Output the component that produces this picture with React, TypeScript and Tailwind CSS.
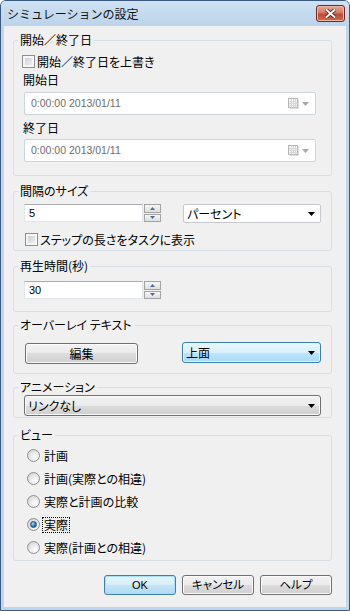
import React from 'react';

const num = "font-['Liberation_Sans',sans-serif]";

function Checkbox() {
  return (
    <div className="w-[13px] h-[13px] shrink-0 border border-[#8e8f8f] bg-[#f6f6f6] p-[2px]">
      <div className="w-full h-full bg-[linear-gradient(135deg,#cbcfd5,#eef0f2)]" />
    </div>
  );
}

function Radio({ checked }: { checked?: boolean }) {
  return (
    <div className="w-[13px] h-[13px] shrink-0 rounded-full border border-[#8e8f8f] bg-[radial-gradient(circle_at_65%_70%,#ffffff,#e4e5e7_55%,#c9cbce)] flex items-center justify-center">
      {checked && (
        <div className="w-[7px] h-[7px] rounded-full border border-[#1a4a72] bg-[radial-gradient(circle_at_35%_35%,#9fdcfa,#2a77b0_60%,#124a78)]" />
      )}
    </div>
  );
}

function DropArrow() {
  return (
    <svg width="7" height="4" viewBox="0 0 7 4">
      <path d="M0 0H7L3.5 4Z" fill="#000" />
    </svg>
  );
}

function SpinButtons() {
  return (
    <div className="w-[17px] h-[18px] flex flex-col gap-[1px] ml-[1px]">
      {[0, 1].map((i) => (
        <div
          key={i}
          className="flex-1 border border-[#a3a3a3] bg-[linear-gradient(#f7f7f7,#dedede)] flex items-center justify-center"
        >
          <svg width="5" height="3" viewBox="0 0 5 3">
            <path d={i === 0 ? 'M0 3H5L2.5 0Z' : 'M0 0H5L2.5 3Z'} fill="#4d6a9c" />
          </svg>
        </div>
      ))}
    </div>
  );
}

function SpinBox({ value }: { value: string }) {
  return (
    <div className="flex items-center">
      <div
        className={`w-[119px] h-[18px] bg-white border border-[#e2e6ea] border-t-[#abadb3] flex items-center pl-[4px] text-[11px] ${num}`}
      >
        {value}
      </div>
      <SpinButtons />
    </div>
  );
}

function DateField() {
  return (
    <div
      className={`ml-[10px] w-[292px] h-[23px] bg-white border border-[#cdd4dc] rounded-[2px] flex items-center pl-[6px] pr-[6px] text-[10.5px] text-[#6d6d6d] ${num}`}
    >
      <span className="flex-1">0:00:00 2013/01/11</span>
      <svg width="11" height="11" viewBox="0 0 11 11">
        <rect x="0.5" y="0.5" width="9" height="9" fill="#f4f4f4" stroke="#b8b8b8" />
        <path d="M1 3.5H9.5M1 5.5H9.5M1 7.5H9.5M3.5 1V9.5M5.5 1V9.5M7.5 1V9.5" stroke="#d8d8d8" />
        <path d="M10.5 1.5V10.5H1.5" stroke="#dcdcdc" fill="none" />
      </svg>
      <svg width="7" height="4" viewBox="0 0 7 4" className="ml-[3px]">
        <path d="M0 0H7L3.5 4Z" fill="#a8a8a8" />
      </svg>
    </div>
  );
}

function Group({
  title,
  className,
  children,
}: {
  title: string;
  className?: string;
  children: React.ReactNode;
}) {
  return (
    <fieldset className={`w-[319px] border border-[#d5dfe5] rounded-[3px] ${className ?? ''}`}>
      <legend className="ml-[4px] px-[2px] leading-[14px] text-[12px]">{title}</legend>
      {children}
    </fieldset>
  );
}

function Button({ label, primary, latin }: { label: string; primary?: boolean; latin?: boolean }) {
  return (
    <div
      className={`w-[72px] h-[20px] rounded-[3px] border flex items-center justify-center leading-none ${
        latin ? `text-[11px] ${num}` : 'text-[11.5px]'
      } ${
        primary
          ? 'border-[#3c7fb1] bg-[linear-gradient(#e6f5fc_0%,#d6eefa_50%,#c2e4f6_50%,#b0daf2_100%)] shadow-[inset_0_0_0_1px_#a9e0f7]'
          : 'border-[#707070] bg-[linear-gradient(#f2f2f2_0%,#ebebeb_50%,#dddddd_50%,#cfcfcf_100%)] shadow-[inset_0_0_0_1px_#fbfbfb]'
      }`}
    >
      {label}
    </div>
  );
}

const views = ['計画', '計画(実際との相違)', '実際と計画の比較', '実際', '実際(計画との相違)'];

export default function App() {
  return (
    <div className="w-[350px] h-[611px] flex flex-col border border-[#3a5a80] rounded-t-[6px] bg-[#c0d6ed] text-black font-['Noto_Sans_CJK_JP',sans-serif] [font-feature-settings:'palt']">
      <div className="h-[25px] shrink-0 flex items-start bg-[linear-gradient(#cfe1f3,#bcd3ea)] rounded-t-[5px]">
        <div className="flex-1 pl-[6px] pt-[5px] text-[12px] leading-[16px] [font-feature-settings:normal] text-[#111]">
          シミュレーションの設定
        </div>
        <div className="mt-[4px] mr-[4px] w-[29px] h-[17px] rounded-[3px] border border-[#6c2a22] bg-[linear-gradient(#e8a99c_0%,#d47763_45%,#c04a34_55%,#cf6a50_100%)] shadow-[inset_0_0_0_1px_#f0b8a8] flex items-center justify-center">
          <svg width="11" height="9" viewBox="0 0 11 9">
            <path d="M1.5 1L9.5 8M9.5 1L1.5 8" stroke="#4a1c16" strokeWidth="3.6" strokeLinecap="square" />
            <path d="M1.5 1L9.5 8M9.5 1L1.5 8" stroke="#ffffff" strokeWidth="2" strokeLinecap="square" />
          </svg>
        </div>
      </div>

      <div className="flex-1 mx-[3px] mb-[3px] bg-[#f0f0f0] flex flex-col pl-[9px]">
        <Group title="開始／終了日" className="mt-[7px] pb-[13px]">
          <div className="mt-[7px] h-[15px] flex items-center pl-[8px] text-[12px]">
            <Checkbox />
            <span className="ml-[2px] leading-[15px]">開始／終了日を上書き</span>
          </div>
          <div className="mt-[4px] h-[14px] leading-[14px] pl-[9px] text-[12px]">開始日</div>
          <div className="mt-[5px]">
            <DateField />
          </div>
          <div className="mt-[6px] h-[14px] leading-[14px] pl-[9px] text-[12px]">終了日</div>
          <div className="mt-[4px]">
            <DateField />
          </div>
        </Group>

        <Group title="間隔のサイズ" className="mt-[8px] pb-[3px]">
          <div className="mt-[6px] h-[19px] flex items-start pl-[10px]">
            <SpinBox value="5" />
            <div className="ml-[22px] w-[138px] h-[19px] bg-white border border-[#c6c9ce] rounded-[2px] flex items-center pl-[3px] pr-[5px] text-[12px] leading-none">
              <span className="flex-1">パーセント</span>
              <DropArrow />
            </div>
          </div>
          <div className="mt-[9px] h-[15px] flex items-center pl-[11px] text-[12px]">
            <Checkbox />
            <span className="ml-[2px] leading-[15px]">ステップの長さをタスクに表示</span>
          </div>
        </Group>

        <Group title="再生時間(秒)" className="mt-[8px] pb-[12px]">
          <div className="mt-[8px] pl-[10px]">
            <SpinBox value="30" />
          </div>
        </Group>

        <Group title="オーバーレイ テキスト" className="mt-[6px] pb-[9px]">
          <div className="mt-[10px] h-[22px] flex items-start pl-[11px]">
            <div className="mt-[1px] w-[113px] h-[21px] rounded-[3px] border border-[#707070] bg-[linear-gradient(#f2f2f2_0%,#ebebeb_50%,#dddddd_50%,#cfcfcf_100%)] shadow-[inset_0_0_0_1px_#fbfbfb] flex items-center justify-center text-[12px] leading-none">
              編集
            </div>
            <div className="ml-[44px] w-[139px] h-[21px] rounded-[3px] border border-[#3c7fb1] bg-[linear-gradient(#eaf6fd_0%,#d9f0fc_50%,#bee6fd_50%,#a7d9f5_100%)] shadow-[inset_0_0_0_1px_#e3f4fc] flex items-center pl-[3px] pr-[5px] text-[12px] leading-none">
              <span className="flex-1">上面</span>
              <DropArrow />
            </div>
          </div>
        </Group>

        <Group title="アニメーション" className="mt-[6px] pb-[1px]">
          <div className="mt-[1px] ml-[10px] w-[297px] h-[21px] rounded-[3px] border border-[#707070] bg-[linear-gradient(#f2f2f2_0%,#ebebeb_50%,#dddddd_50%,#cfcfcf_100%)] shadow-[inset_0_0_0_1px_#fbfbfb] flex items-center pl-[3px] pr-[5px] text-[12px] leading-none">
            <span className="flex-1">リンクなし</span>
            <DropArrow />
          </div>
        </Group>

        <Group title="ビュー" className="mt-[10px] pb-[1px]">
          <div className="mt-[2px] flex flex-col">
            {views.map((v, i) => (
              <div key={v} className="h-[23px] flex items-center pl-[13px] text-[12px]">
                <Radio checked={i === 3} />
                <span
                  className={`ml-[2px] leading-[14px] px-[1px] border ${
                    i === 3 ? 'border-dotted border-black' : 'border-transparent'
                  }`}
                >
                  {v}
                </span>
              </div>
            ))}
          </div>
        </Group>

        <div className="mt-[14px] w-[319px] flex justify-end gap-[6px]">
          <Button label="OK" primary latin />
          <Button label="キャンセル" />
          <Button label="ヘルプ" />
        </div>
      </div>
    </div>
  );
}
